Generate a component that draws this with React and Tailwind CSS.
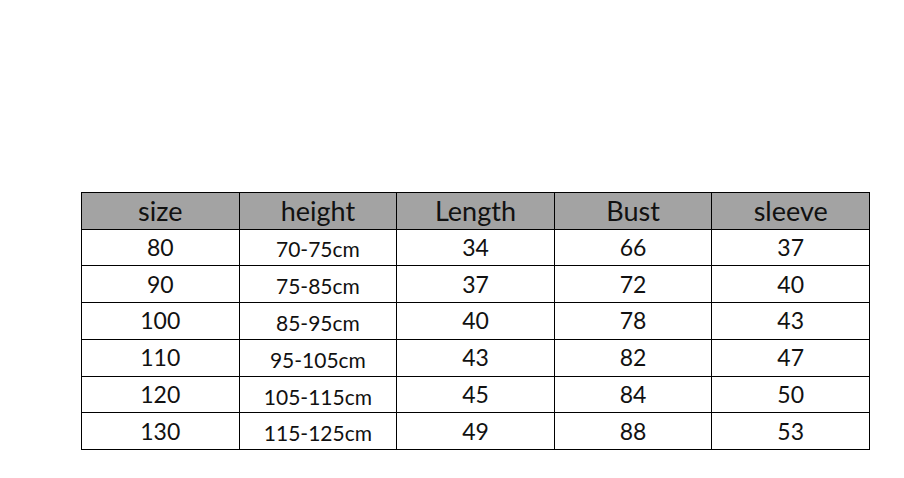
import React from 'react';

const headers = ['size', 'height', 'Length', 'Bust', 'sleeve'];

const rows = [
  ['80', '70-75cm', '34', '66', '37'],
  ['90', '75-85cm', '37', '72', '40'],
  ['100', '85-95cm', '40', '78', '43'],
  ['110', '95-105cm', '43', '82', '47'],
  ['120', '105-115cm', '45', '84', '50'],
  ['130', '115-125cm', '49', '88', '53'],
];

export default function App() {
  return (
    <div className="w-[904px] h-[478px] bg-white pt-[192px] pl-[81px]" style={{ fontFamily: 'Lato, "Open Sans", sans-serif' }}>
      <table className="border-collapse text-[#111] w-[789px] table-fixed">
        <thead>
          <tr className="bg-[#a3a3a3]">
            {headers.map((h) => (
              <th key={h} className="h-[36.5px] border border-black p-0 font-normal text-[27px] leading-none">
                {h}
              </th>
            ))}
          </tr>
        </thead>
        <tbody>
          {rows.map((r) => (
            <tr key={r[0]}>
              {r.map((c, i) => (
                <td
                  key={i}
                  className={`h-[36.8px] border border-black p-0 text-center leading-none ${i === 1 ? 'text-[21px] pt-[3px]' : 'text-[23px]'}`}
                >
                  {c}
                </td>
              ))}
            </tr>
          ))}
        </tbody>
      </table>
    </div>
  );
}
